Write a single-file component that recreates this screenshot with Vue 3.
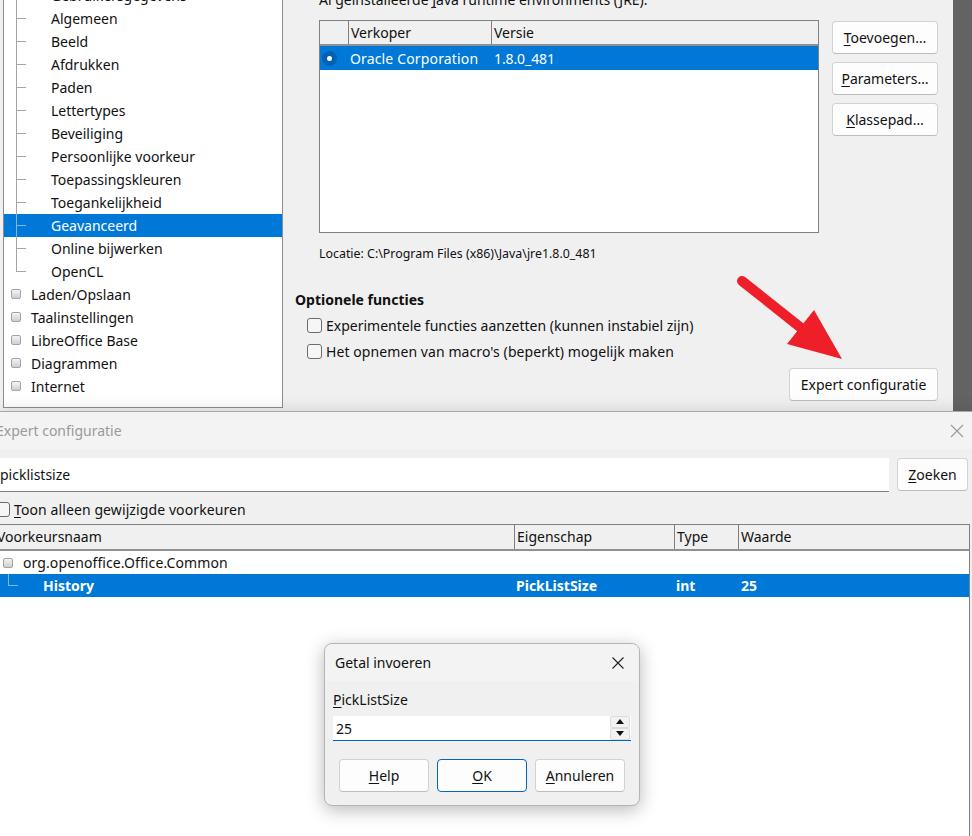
<script setup>
const children = ['Gebruikersgegevens','Algemeen','Beeld','Afdrukken','Paden','Lettertypes','Beveiliging','Persoonlijke voorkeur','Toepassingskleuren','Toegankelijkheid','Geavanceerd','Online bijwerken','OpenCL']
const roots = ['Laden/Opslaan','Taalinstellingen','LibreOffice Base','Diagrammen','Internet']
const sideButtons = [
  { key: 'T', rest: 'oevoegen…' },
  { key: 'P', rest: 'arameters…' },
  { key: 'K', rest: 'lassepad…' }
]
</script>

<template>
  <div class="screen">
    <section class="options">
      <div class="panel">
        <nav class="tree">
          <div
            v-for="(c, i) in children"
            :key="c"
            class="row"
            :class="{ sel: c === 'Geavanceerd' }"
          >
            <span class="conn" :class="{ last: i === children.length - 1 }"></span>
            <span>{{ c }}</span>
          </div>
          <div v-for="r in roots" :key="r" class="row root">
            <span class="node"></span>
            <span>{{ r }}</span>
          </div>
        </nav>
        <div class="content">
          <div class="java">
            <p class="intro">Al geïnstalleerde <u>J</u>ava runtime environments (JRE):</p>
            <div class="jre">
              <div class="jtable">
                <div class="jhead">
                  <span class="c0"></span>
                  <span class="c1">Verkoper</span>
                  <span class="c2">Versie</span>
                </div>
                <div class="jrow">
                  <span class="c0"><i class="radio"></i></span>
                  <span class="c1">Oracle Corporation</span>
                  <span class="c2">1.8.0_481</span>
                </div>
              </div>
              <div class="side">
                <button v-for="b in sideButtons" :key="b.key" class="btn"><u>{{ b.key }}</u>{{ b.rest }}</button>
              </div>
            </div>
            <p class="loc">Locatie: C:\Program Files (x86)\Java\jre1.8.0_481</p>
          </div>
          <h3 class="opt-title">Optionele functies</h3>
          <div class="checks">
            <label class="check"><i class="box"></i>Experimentele functies aanzetten (kunnen instabiel zijn)</label>
            <label class="check wide"><i class="box"></i>Het opnemen van macro's (beperkt) mogelijk maken</label>
          </div>
          <button class="btn expert">Expert configuratie</button>
        </div>
      </div>
      <div class="strip"></div>
      <svg class="arrow" width="120" height="100" viewBox="0 0 120 100">
        <path d="M6 7 L74 61" stroke="#ee1f28" stroke-width="10" stroke-linecap="round" fill="none" />
        <path d="M78 36 L51 70 L106 85 Z" fill="#ee1f28" />
      </svg>
    </section>

    <section class="expert-win">
      <header class="title-bar">
        <span class="title">Expert configuratie</span>
        <svg class="close" width="14" height="14" viewBox="0 0 14 14">
          <path d="M1 1 L13 13 M13 1 L1 13" stroke="#9a9a9a" stroke-width="1.1" fill="none" />
        </svg>
      </header>
      <div class="search">
        <div class="field">picklistsize</div>
        <button class="btn zoek"><u>Z</u>oeken</button>
      </div>
      <label class="check only"><i class="box"></i><span><u>T</u>oon alleen gewijzigde voorkeuren</span></label>
      <div class="prefs">
        <div class="phead">
          <span class="p0">Voorkeursnaam</span>
          <span class="p1">Eigenschap</span>
          <span class="p2">Type</span>
          <span class="p3">Waarde</span>
        </div>
        <div class="plist">
          <div class="prow">
            <span class="node pnode"></span>
            <span class="porg">org.openoffice.Office.Common</span>
          </div>
          <div class="prow psel">
            <span class="pconn"></span>
            <span class="pname">History</span>
            <span class="pv1">PickListSize</span>
            <span class="pv2">int</span>
            <span class="pv3">25</span>
          </div>
        </div>
      </div>
    </section>

    <div class="num-dialog">
      <header class="num-title">
        <span>Getal invoeren</span>
        <svg width="14" height="14" viewBox="0 0 14 14">
          <path d="M1.5 1.5 L12.5 12.5 M12.5 1.5 L1.5 12.5" stroke="#222" stroke-width="1.1" fill="none" />
        </svg>
      </header>
      <div class="num-body">
        <div class="num-label"><u>P</u>ickListSize</div>
        <div class="num-input">
          <span>25</span>
          <div class="spin">
            <span class="sbtn"><i class="up"></i></span>
            <span class="sbtn"><i class="down"></i></span>
          </div>
        </div>
        <div class="num-actions">
          <button class="btn nb"><u>H</u>elp</button>
          <button class="btn nb ok"><u>O</u>K</button>
          <button class="btn nb"><u>A</u>nnuleren</button>
        </div>
      </div>
    </div>
  </div>
</template>

<style>
html, body { margin: 0; background: #636363; }
</style>

<style scoped>
.screen {
  position: relative;
  width: 972px;
  height: 836px;
  overflow: hidden;
  display: flex;
  flex-direction: column;
  font-family: "Noto Sans", "Open Sans", sans-serif;
  font-size: 14px;
  color: #111;
  background: #636363;
}
p, h3 { margin: 0; }
u { text-underline-offset: 2px; text-decoration-thickness: 1px; }
i { display: block; }

.options {
  position: relative;
  height: 411px;
  flex: none;
  display: flex;
  overflow: hidden;
}
.panel {
  width: 953px;
  flex: none;
  display: flex;
  background: #f0f0f0;
  overflow: hidden;
}
.strip { flex: 1; background: #636363; }
.arrow { position: absolute; left: 736px; top: 274px; }

.tree {
  width: 278px;
  height: 423px;
  flex: none;
  margin: -17px 0 0 3px;
  border: 1px solid #8c8c94;
  background: #fff;
}
.row {
  height: 23px;
  line-height: 23px;
  display: flex;
  white-space: nowrap;
}
.row.sel { background: #0078d7; color: #fff; }
.conn {
  width: 10px;
  margin: 0 25px 0 12px;
  flex: none;
  --l: #a4a4a4;
  background:
    linear-gradient(var(--l), var(--l)) 0 0 / 1px 100% no-repeat,
    linear-gradient(var(--l), var(--l)) 0 11px / 10px 1px no-repeat;
}
.conn.last {
  background:
    linear-gradient(var(--l), var(--l)) 0 0 / 1px 12px no-repeat,
    linear-gradient(var(--l), var(--l)) 0 11px / 10px 1px no-repeat;
}
.sel .conn { --l: #7db5e6; }
.node {
  width: 8px;
  height: 8px;
  flex: none;
  margin: 6px 10px 0 7px;
  border: 1px solid #a4a4a4;
  border-radius: 2px;
  background: linear-gradient(#f4f4f4, #cfcfcf);
}

.content {
  flex: 1;
  margin-left: 12px;
  display: flex;
  flex-direction: column;
  min-width: 0;
}
.java { padding-left: 24px; }
.intro { height: 19px; line-height: 19px; margin-top: -10px; white-space: nowrap; }
.jre { display: flex; gap: 13px; margin-top: 11px; }
.jtable {
  width: 498px;
  height: 211px;
  flex: none;
  border: 1px solid #808080;
  background: #fff;
}
.jhead {
  display: flex;
  height: 23px;
  line-height: 24px;
  background: #f0f0f0;
  border-bottom: 2px solid #909090;
  box-sizing: content-box;
}
.jrow {
  display: flex;
  height: 24px;
  line-height: 25px;
  background: #0078d7;
  color: #fff;
}
.c0 { width: 28px; flex: none; display: flex; align-items: center; }
.c1 { width: 143px; flex: none; padding-left: 2px; box-sizing: border-box; }
.c2 { padding-left: 2px; }
.jhead .c1, .jhead .c2 { border-left: 1px solid #808080; height: 23px; padding-left: 2px; }
.jrow .c1 { letter-spacing: 0.15px; }
.jrow .c2 { margin-left: 1px; letter-spacing: -0.1px; }
.radio {
  width: 5px;
  height: 5px;
  margin: 1px 0 0 2px;
  border: 5px solid #0060b4;
  border-radius: 50%;
  background: #fff;
}
.side { display: flex; flex-direction: column; gap: 8px; padding-top: 1px; }

.btn {
  font: inherit;
  color: #111;
  height: 33px;
  padding: 0;
  box-sizing: border-box;
  border: 1px solid #d2d2d2;
  border-bottom-color: #bcbcbc;
  border-radius: 4px;
  background: #fdfdfd;
  white-space: nowrap;
}
.side .btn { width: 106px; }
.loc { margin-top: 12px; height: 18px; line-height: 18px; font-size: 12.4px; white-space: nowrap; }
.opt-title { margin-top: 27px; height: 20px; line-height: 20px; font-size: 14px; font-weight: 700; }
.checks { margin-top: 2px; padding-left: 12px; }
.check { display: flex; align-items: center; height: 26px; white-space: nowrap; }
.wide { letter-spacing: 0.08px; }
.box {
  width: 13px;
  height: 13px;
  flex: none;
  margin-right: 4px;
  border: 1px solid #6c6c6c;
  border-radius: 3px;
  background: #f6f6f6;
}
.expert {
  align-self: flex-end;
  width: 149px;
  margin: 4px 15px 0 0;
}

.expert-win {
  position: relative;
  flex: 1;
  display: flex;
  flex-direction: column;
  background: #f0f0f0;
  border-top: 1px solid #a8a8a8;
  box-shadow: 0 -3px 14px rgba(0, 0, 0, 0.1);
}
.title-bar {
  height: 37px;
  flex: none;
  display: flex;
  align-items: center;
  justify-content: space-between;
  padding-right: 8px;
  background: #f3f3f3;
}
.title { margin-left: -4px; color: #9a9a9a; }
.search { display: flex; gap: 8px; margin-top: 9px; padding-right: 4px; }
.field {
  flex: 1;
  height: 33px;
  line-height: 33px;
  background: #fff;
  border-bottom: 1px solid #808080;
  white-space: nowrap;
}
.zoek { width: 71px; }
.only { margin: 4px 0 2px -5px; height: 26px; letter-spacing: 0.1px; }
.prefs { flex: 1; display: flex; flex-direction: column; margin: 0 2px 0 0; min-height: 0; }
.phead {
  display: flex;
  height: 24px;
  line-height: 24px;
  margin-top: 0;
  border: 1px solid #808080;
  border-left: none;
  border-bottom: 2px solid #909090;
  box-sizing: content-box;
}
.phead span { display: block; box-sizing: border-box; height: 24px; padding-left: 2px; white-space: nowrap; }
.phead span + span { border-left: 1px solid #808080; }
.p0 { width: 514px; margin-left: 0; padding-left: 0 !important; text-indent: -3px; overflow: hidden; }
.p1 { width: 160px; }
.p2 { width: 64px; }
.p3 { flex: 1; }
.plist {
  flex: 1;
  background: #fff;
  border-right: 1px solid #808080;
  padding-top: 0;
}
.prow { position: relative; display: flex; height: 23px; line-height: 23px; white-space: nowrap; }
.pnode { margin: 7px 10px 0 3px; }
.porg { letter-spacing: 0.1px; }
.psel { background: #0078d7; color: #fff; font-weight: 700; }
.pconn {
  width: 10px;
  height: 12px;
  flex: none;
  margin: 0 0 0 8px;
  border-left: 1px solid #7db5e6;
  border-bottom: 1px solid #7db5e6;
  box-sizing: border-box;
}
.pname { width: 473px; flex: none; margin-left: 25px; }
.pv1 { width: 160px; flex: none; }
.pv2 { width: 65px; flex: none; }

.num-dialog {
  position: absolute;
  left: 324px;
  top: 643px;
  width: 314px;
  height: 161px;
  border: 1px solid #b4b4b4;
  border-radius: 8px;
  background: #f0f0f0;
  box-shadow: 0 4px 18px rgba(0, 0, 0, 0.28);
  display: flex;
  flex-direction: column;
}
.num-title {
  height: 37px;
  flex: none;
  display: flex;
  align-items: center;
  justify-content: space-between;
  padding: 0 14px 0 10px;
  background: #f3f3f3;
  border-radius: 8px 8px 0 0;
}
.num-body { flex: 1; padding: 0 8px 0 8px; }
.num-label { height: 20px; line-height: 20px; margin-top: 9px; }
.num-input {
  height: 24px;
  margin-top: 6px;
  background: #fff;
  border-bottom: 1px solid #0067c0;
  display: flex;
  align-items: center;
  justify-content: space-between;
  padding: 0 1px 0 3px;
}
.spin { display: flex; flex-direction: column; gap: 1px; }
.sbtn {
  width: 18px;
  height: 10px;
  display: flex;
  align-items: center;
  justify-content: center;
  background: #f2f2f2;
  border: 1px solid #dcdcdc;
  border-radius: 2px;
  box-sizing: content-box;
  margin-top: -1px;
}
.up { border: 4px solid transparent; border-top: none; border-bottom: 5px solid #111; }
.down { border: 4px solid transparent; border-bottom: none; border-top: 5px solid #111; }
.num-actions { display: flex; gap: 8px; margin: 18px 0 0 6px; }
.nb { width: 90px; }
.ok { border: 1px solid #0067c0; }
</style>
